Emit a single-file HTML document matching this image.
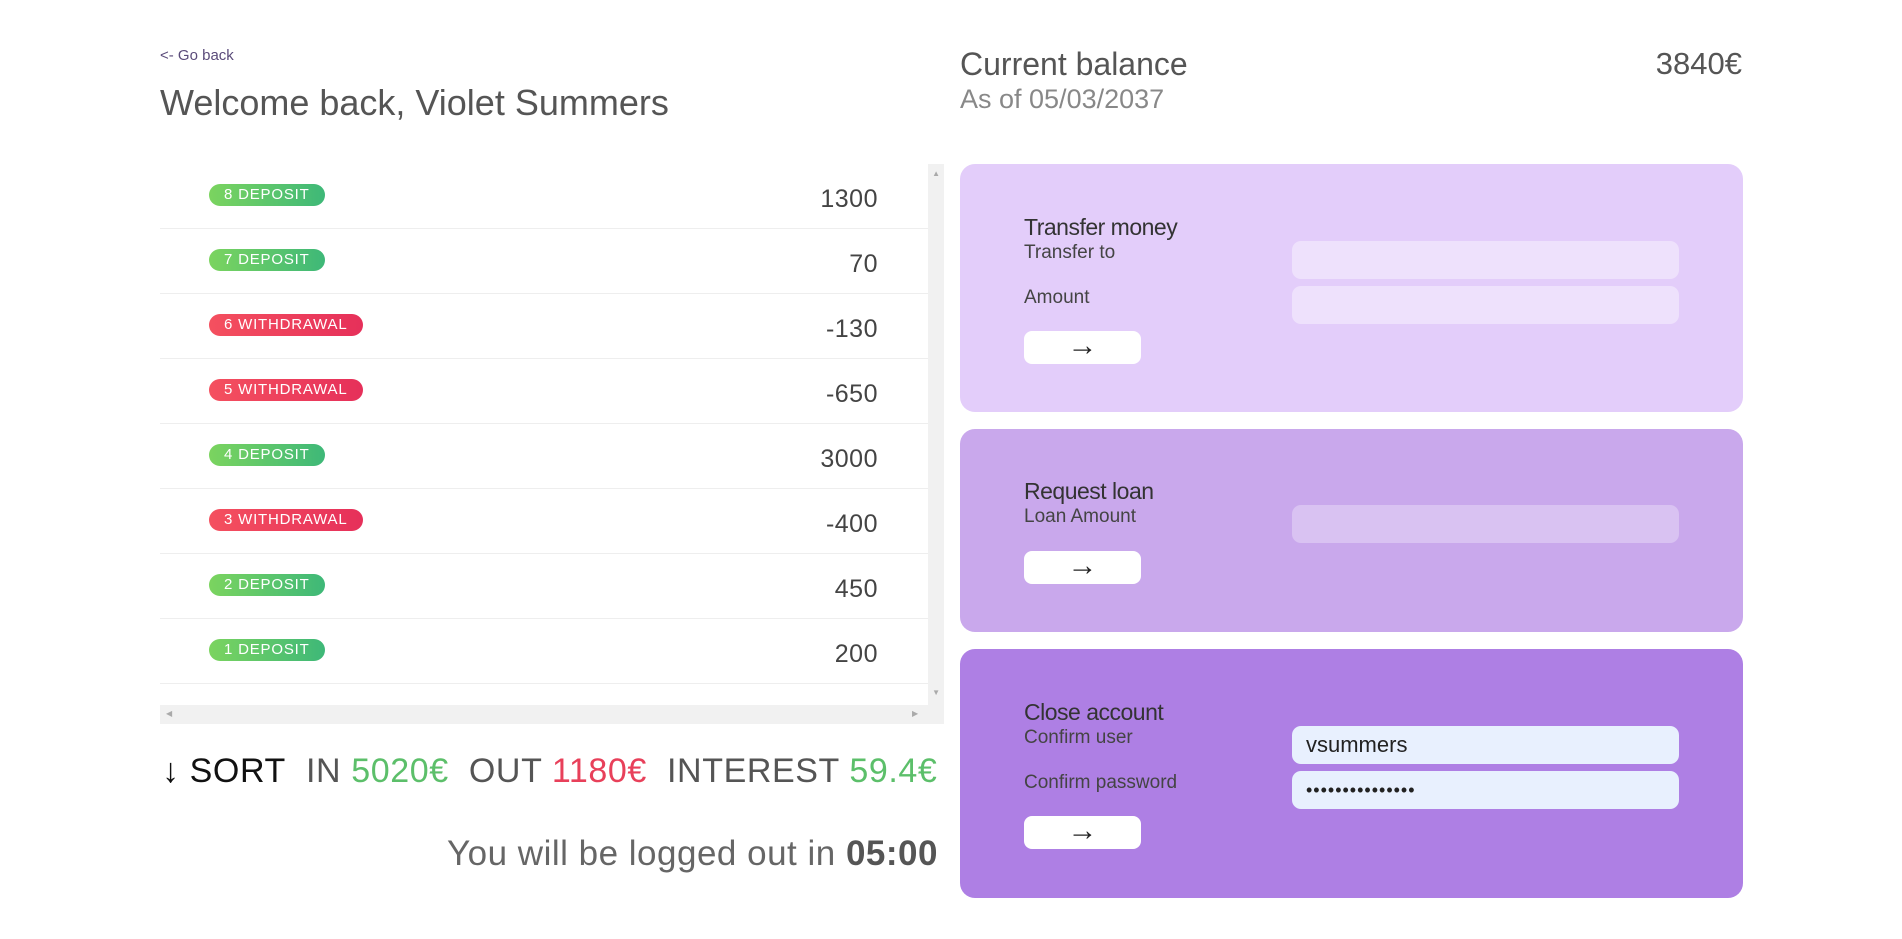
<!DOCTYPE html>
<html><head><meta charset="utf-8"><style>
*{box-sizing:border-box;margin:0;padding:0}
body{width:1902px;height:939px;background:#fff;font-family:"Liberation Sans",sans-serif;color:#444;position:relative;overflow:hidden}
.a{position:absolute;white-space:nowrap}
.row{position:absolute;left:160px;width:768px;height:65px;border-bottom:1px solid #eee}
.badge{position:absolute;left:49px;top:20px;height:22px;border-radius:11px;color:#fff;font-size:15px;line-height:22px;padding:0 15px;letter-spacing:0.8px}
.dep{background:linear-gradient(90deg,#7bd45f,#3eb878)}
.wd{background:linear-gradient(90deg,#f4505f,#e6305a)}
.val{position:absolute;right:50px;top:21px;font-size:25px;color:#444;letter-spacing:0.5px}
.panel{position:absolute;left:960px;width:783px;border-radius:15px}
.t{position:absolute;left:64px;font-size:23px;color:#333;letter-spacing:-0.5px}
.l{position:absolute;left:64px;font-size:19px;color:#444}
.in{position:absolute;left:332px;width:387px;height:38px;border-radius:9px;background:rgba(255,255,255,.4);font-size:22px;padding-left:14px;line-height:38px;color:#222}
.btn{position:absolute;left:64px;width:117px;height:33px;border-radius:8px;background:#fff;text-align:center;font-size:30px;line-height:30px;color:#222}
</style></head><body>
<div class="a" style="left:160px;top:47px;font-size:15px;color:#5a4b7a">&lt;- Go back</div>
<div class="a" style="left:160px;top:82px;font-size:36px;color:#555">Welcome back, Violet Summers</div>
<div class="a" style="left:960px;top:46px;font-size:32px;color:#555">Current balance</div>
<div class="a" style="left:960px;top:84px;font-size:27px;color:#888">As of 05/03/2037</div>
<div class="a" style="right:160px;top:46px;font-size:31px;color:#555">3840€</div>

<div class="a" style="left:160px;top:164px;width:784px;height:560px;overflow:hidden">
<div style="position:absolute;right:0;top:0;width:16px;height:541px;background:#f1f1f1"></div>
<div style="position:absolute;left:0;bottom:0;width:784px;height:19px;background:#f1f1f1"></div>
<div style="position:absolute;right:4px;top:5px;font-size:8px;color:#aaa">▲</div>
<div style="position:absolute;right:4px;top:524px;font-size:8px;color:#aaa">▼</div>
<div style="position:absolute;left:6px;top:545px;font-size:8px;color:#aaa">◀</div>
<div style="position:absolute;left:752px;top:545px;font-size:8px;color:#aaa">▶</div>
</div>
<div class="row" style="top:164px"><span class="badge dep">8 DEPOSIT</span><span class="val">1300</span></div>
<div class="row" style="top:229px"><span class="badge dep">7 DEPOSIT</span><span class="val">70</span></div>
<div class="row" style="top:294px"><span class="badge wd">6 WITHDRAWAL</span><span class="val">-130</span></div>
<div class="row" style="top:359px"><span class="badge wd">5 WITHDRAWAL</span><span class="val">-650</span></div>
<div class="row" style="top:424px"><span class="badge dep">4 DEPOSIT</span><span class="val">3000</span></div>
<div class="row" style="top:489px"><span class="badge wd">3 WITHDRAWAL</span><span class="val">-400</span></div>
<div class="row" style="top:554px"><span class="badge dep">2 DEPOSIT</span><span class="val">450</span></div>
<div class="row" style="top:619px"><span class="badge dep">1 DEPOSIT</span><span class="val">200</span></div>

<div class="a" style="left:162px;top:752px;font-size:34px;color:#555;letter-spacing:0.6px"><span style="color:#111">↓ SORT</span>&nbsp; IN <span style="color:#5cbf6a">5020€</span>&nbsp; OUT <span style="color:#e8405a">1180€</span>&nbsp; INTEREST <span style="color:#5cbf6a">59.4€</span></div>
<div class="a" style="right:964px;top:834px;font-size:35px;color:#666;letter-spacing:0.5px">You will be logged out in <b style="color:#555">05:00</b></div>

<div class="panel" style="top:164px;height:248px;background:#e3cdfa">
<div class="t" style="top:50px">Transfer money</div>
<div class="l" style="top:78px">Transfer to</div>
<div class="l" style="top:123px">Amount</div>
<div class="in" style="top:77px"></div>
<div class="in" style="top:122px"></div>
<div class="btn" style="top:167px">→</div>
</div>
<div class="panel" style="top:429px;height:203px;background:#c9a8ec">
<div class="t" style="top:49px">Request loan</div>
<div class="l" style="top:77px">Loan Amount</div>
<div class="in" style="top:76px;background:rgba(255,255,255,.3)"></div>
<div class="btn" style="top:122px">→</div>
</div>
<div class="panel" style="top:649px;height:249px;background:#ae7fe4">
<div class="t" style="top:50px">Close account</div>
<div class="l" style="top:78px">Confirm user</div>
<div class="l" style="top:123px">Confirm password</div>
<div class="in" style="top:77px;background:#e8f0fe">vsummers</div>
<div class="in" style="top:122px;background:#e8f0fe;font-size:18px;letter-spacing:1px">•••••••••••••••</div>
<div class="btn" style="top:167px">→</div>
</div>
</body></html>
